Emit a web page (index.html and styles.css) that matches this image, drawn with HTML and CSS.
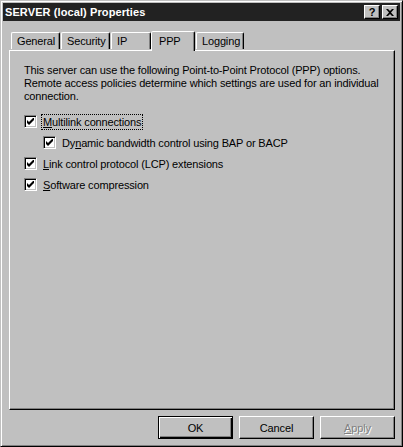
FILE: index.html
```html
<!DOCTYPE html>
<html lang="en">
<head>
  <meta charset="UTF-8" />
  <title>SERVER (local) Properties</title>
  <link rel="stylesheet" href="styles.css">
</head>
<body>
  <div class="window">
    <div class="titlebar">
      <span class="title">SERVER (local) Properties</span>
      <div class="title-buttons">
        <button class="tbtn">?</button>
        <button class="tbtn">
          <svg width="8" height="7" viewBox="0 0 8 7"><path d="M0 0h2l2 2 2-2h2L5 3.5 8 7H6L4 5 2 7H0l3-3.5z" fill="#000"/></svg>
        </button>
      </div>
    </div>

    <div class="tabs">
      <div class="tab t-general">General</div>
      <div class="tab t-security">Security</div>
      <div class="tab t-ip">IP</div>
      <div class="tab active">PPP</div>
      <div class="tab t-logging">Logging</div>
    </div>

    <div class="panel">
      <p class="intro">
        This server can use the following Point-to-Point Protocol (PPP) options.<br>
        Remote access policies determine which settings are used for an individual<br>
        connection.
      </p>

      <label class="check">
        <span class="box"><svg width="7" height="7" viewBox="0 0 7 7"><path d="M0 2v3l2 2 5-5V-1L2 4z" fill="#000"/></svg></span>
        <span class="lbl focus"><u>M</u>ultilink connections</span>
      </label>
      <label class="check sub">
        <span class="box"><svg width="7" height="7" viewBox="0 0 7 7"><path d="M0 2v3l2 2 5-5V-1L2 4z" fill="#000"/></svg></span>
        <span class="lbl">Dy<u>n</u>amic bandwidth control using BAP or BACP</span>
      </label>
      <label class="check gap">
        <span class="box"><svg width="7" height="7" viewBox="0 0 7 7"><path d="M0 2v3l2 2 5-5V-1L2 4z" fill="#000"/></svg></span>
        <span class="lbl"><u>L</u>ink control protocol (LCP) extensions</span>
      </label>
      <label class="check">
        <span class="box"><svg width="7" height="7" viewBox="0 0 7 7"><path d="M0 2v3l2 2 5-5V-1L2 4z" fill="#000"/></svg></span>
        <span class="lbl"><u>S</u>oftware compression</span>
      </label>
    </div>

    <div class="actions">
      <button class="btn default">OK</button>
      <button class="btn">Cancel</button>
      <button class="btn disabled"><u>A</u>pply</button>
    </div>
  </div>
</body>
</html>
```

FILE: styles.css
```css
body {
  margin: 0;
  background: #c0c0c0;
  font-family: "Liberation Sans", Arial, sans-serif;
  font-size: 11px;
  letter-spacing: -0.15px;
  color: #000;
}

.window {
  width: 403px;
  height: 447px;
  box-sizing: border-box;
  background: #c0c0c0;
  border: 1px solid;
  border-color: #c0c0c0 #000 #000 #c0c0c0;
  box-shadow: inset 1px 1px 0 #fff, inset -1px -1px 0 #808080;
  padding: 2px 2px;
}

.titlebar {
  height: 18px;
  background: #222;
  display: flex;
  align-items: center;
  justify-content: space-between;
  padding: 0 2px 0 2px;
}

.title {
  color: #fff;
  font-weight: bold;
  font-size: 11px;
  letter-spacing: 0.1px;
}

.title-buttons {
  display: flex;
  gap: 2px;
}

.tbtn {
  width: 16px;
  height: 14px;
  padding: 0;
  margin: 0;
  background: #c0c0c0;
  border: 1px solid;
  border-color: #fff #000 #000 #fff;
  box-shadow: inset -1px -1px 0 #808080;
  font-family: "Liberation Sans", Arial, sans-serif;
  font-weight: bold;
  font-size: 11px;
  line-height: 12px;
  display: flex;
  align-items: center;
  justify-content: center;
}

.tabs {
  display: flex;
  align-items: flex-end;
  height: 25px;
  margin: 4px 0 0 8px;
  position: relative;
  z-index: 1;
}

.tab {
  height: 17px;
  box-sizing: border-box;
  padding: 1px 0 0 5px;
  border: 1px solid;
  border-bottom: none;
  border-color: #fff #000 transparent #fff;
  box-shadow: inset -1px 0 0 #808080;
  border-radius: 2px 2px 0 0;
  line-height: 15px;
  margin-right: 1px;
  margin-bottom: 1px;
}

.t-general { width: 49px; }
.t-security { width: 49px; }
.t-ip { width: 40px; margin-right: 0; }
.t-logging { width: 48px; }

.active {
  width: 44px;
  height: 20px;
  padding: 2px 0 0 7px;
  line-height: 14px;
  margin-bottom: -1px;
  background: #c0c0c0;
}

.panel {
  margin: 0 5px 0 6px;
  height: 360px;
  box-sizing: border-box;
  border: 1px solid;
  border-color: #fff #000 #000 #fff;
  box-shadow: inset -1px -1px 0 #808080;
  padding: 13px 14px;
}

.intro {
  margin: 0 0 10px;
  line-height: 13px;
}

.check {
  display: flex;
  align-items: center;
  gap: 5px;
  height: 17px;
  margin-bottom: 4px;
}

.check.sub {
  margin-left: 19px;
}

.check.gap {
  margin-top: 3px;
}

.box {
  width: 13px;
  height: 13px;
  box-sizing: border-box;
  background: #fff;
  border: 1px solid;
  border-color: #808080 #fff #fff #808080;
  box-shadow: inset 1px 1px 0 #000, inset -1px -1px 0 #c0c0c0;
  display: flex;
  align-items: center;
  justify-content: center;
}

.lbl {
  padding: 1px 1px;
}

.focus {
  outline: 1px dotted #000;
}

.actions {
  display: flex;
  justify-content: flex-end;
  gap: 6px;
  margin: 6px 5px 0 0;
}

.btn {
  width: 75px;
  height: 23px;
  margin: 0;
  padding: 0;
  background: #c0c0c0;
  font-family: "Liberation Sans", Arial, sans-serif;
  font-size: 11px;
  letter-spacing: -0.15px;
  color: #000;
  border: 1px solid;
  border-color: #fff #000 #000 #fff;
  box-shadow: inset -1px -1px 0 #808080;
}

.btn.default {
  border: 1px solid #000;
  box-shadow: inset 1px 1px 0 #fff, inset -1px -1px 0 #000, inset -2px -2px 0 #808080;
}

.btn.disabled {
  color: #808080;
  text-shadow: 1px 1px 0 #fff;
}
```
